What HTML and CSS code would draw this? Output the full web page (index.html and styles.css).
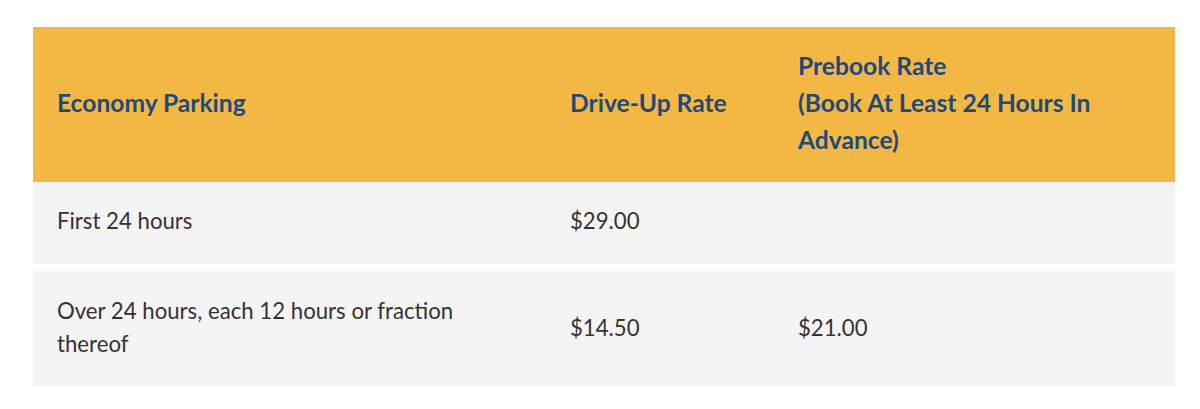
FILE: index.html
```html
<!DOCTYPE html>
<html lang="en">
<head>
<meta charset="utf-8">
<title>Economy Parking Rates</title>
<link rel="stylesheet" href="styles.css">
</head>
<body>
<main class="page">
  <table class="rates">
    <colgroup>
      <col class="col-name">
      <col class="col-drive">
      <col class="col-prebook">
    </colgroup>
    <thead>
      <tr>
        <th>Economy Parking</th>
        <th>Drive-Up Rate</th>
        <th>Prebook Rate<br>(Book At Least 24 Hours In Advance)</th>
      </tr>
    </thead>
    <tbody>
      <tr>
        <td>First 24 hours</td>
        <td>$29.00</td>
        <td></td>
      </tr>
      <tr class="spaced">
        <td>Over 24 hours, each 12 hours or fraction thereof</td>
        <td>$14.50</td>
        <td>$21.00</td>
      </tr>
    </tbody>
  </table>
</main>
</body>
</html>
```
FILE: styles.css
```css
html, body {
  margin: 0;
  padding: 0;
  background: #ffffff;
}

.page {
  padding: 27px 25px 0 33px;
}

.rates {
  width: 1142px;
  border-collapse: collapse;
  table-layout: fixed;
  font-family: "Lato", "Liberation Sans", sans-serif;
}

.col-name { width: 513px; }
.col-drive { width: 228px; }
.col-prebook { width: 401px; }

.rates th {
  background: #f3b743;
  color: #1f4a7c;
  font-weight: 700;
  font-size: 24.6px;
  line-height: 37px;
  text-align: left;
  vertical-align: middle;
  padding: 20px 40px 24px 24px;
  height: 111px;
}

.rates td {
  background: #f4f4f4;
  color: #333333;
  font-weight: 400;
  font-size: 22.2px;
  line-height: 33px;
  text-align: left;
  vertical-align: middle;
  padding: 22px 40px 27px 24px;
}

.rates tr.spaced td {
  border-top: 7px solid #ffffff;
  padding-top: 23px;
  padding-bottom: 26px;
}
```
